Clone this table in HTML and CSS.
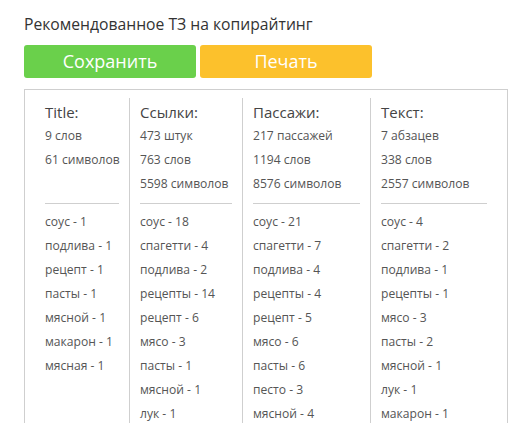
FILE: index.html
```html
<!DOCTYPE html>
<html lang="ru">
<head>
<meta charset="utf-8">
<title>Рекомендованное ТЗ на копирайтинг</title>
<link rel="stylesheet" href="styles.css">
</head>
<body>
<div class="page">
  <h1 class="page-title">Рекомендованное ТЗ на копирайтинг</h1>
  <div class="actions">
    <button class="btn btn-save">Сохранить</button>
    <button class="btn btn-print">Печать</button>
  </div>
  <div class="report">
    <div class="col">
      <div class="col-head">Title:</div>
      <ul class="stats">
        <li>9 слов</li>
        <li>61 символов</li>
      </ul>
      <hr class="rule">
      <ul class="words">
        <li>соус - 1</li>
        <li>подлива - 1</li>
        <li>рецепт - 1</li>
        <li>пасты - 1</li>
        <li>мясной - 1</li>
        <li>макарон - 1</li>
        <li>мясная - 1</li>
      </ul>
    </div>
    <div class="col">
      <div class="col-head">Ссылки:</div>
      <ul class="stats">
        <li>473 штук</li>
        <li>763 слов</li>
        <li>5598 символов</li>
      </ul>
      <hr class="rule">
      <ul class="words">
        <li>соус - 18</li>
        <li>спагетти - 4</li>
        <li>подлива - 2</li>
        <li>рецепты - 14</li>
        <li>рецепт - 6</li>
        <li>мясо - 3</li>
        <li>пасты - 1</li>
        <li>мясной - 1</li>
        <li>лук - 1</li>
      </ul>
    </div>
    <div class="col">
      <div class="col-head">Пассажи:</div>
      <ul class="stats">
        <li>217 пассажей</li>
        <li>1194 слов</li>
        <li>8576 символов</li>
      </ul>
      <hr class="rule">
      <ul class="words">
        <li>соус - 21</li>
        <li>спагетти - 7</li>
        <li>подлива - 4</li>
        <li>рецепты - 4</li>
        <li>рецепт - 5</li>
        <li>мясо - 6</li>
        <li>пасты - 6</li>
        <li>песто - 3</li>
        <li>мясной - 4</li>
      </ul>
    </div>
    <div class="col">
      <div class="col-head">Текст:</div>
      <ul class="stats">
        <li>7 абзацев</li>
        <li>338 слов</li>
        <li>2557 символов</li>
      </ul>
      <hr class="rule">
      <ul class="words">
        <li>соус - 4</li>
        <li>спагетти - 2</li>
        <li>подлива - 1</li>
        <li>рецепты - 1</li>
        <li>мясо - 3</li>
        <li>пасты - 2</li>
        <li>мясной - 1</li>
        <li>лук - 1</li>
        <li>макарон - 1</li>
      </ul>
    </div>
  </div>
</div>
</body>
</html>
```

FILE: styles.css
```css
html, body {
  margin: 0;
  padding: 0;
  background: #ffffff;
}

body {
  font-family: "Open Sans", "Noto Sans", sans-serif;
  color: #555555;
}

.page {
  padding: 14px 7px 0 24px;
}

.page-title {
  margin: 0;
  font-size: 15.7px;
  line-height: 20px;
  font-weight: 400;
  color: #333333;
  white-space: nowrap;
}

.actions {
  display: flex;
  gap: 4px;
  margin-top: 11px;
}

.btn {
  width: 172px;
  height: 33px;
  border: 0;
  border-radius: 3px;
  font-family: "Open Sans", "Noto Sans", sans-serif;
  font-size: 18px;
  color: #ffffff;
  padding: 0;
  line-height: 33px;
}

.btn-save {
  background: #6ad04b;
}

.btn-print {
  background: #fcc12c;
}

.report {
  margin-top: 11px;
  width: 484px;
  box-sizing: border-box;
  border: 1px solid #cfcfcf;
  border-bottom: 0;
  padding: 8px 10px 0 10px;
  display: grid;
  grid-template-columns: 95px 113px 128px 1fr;
}

.col {
  padding: 2px 10px 0 10px;
  border-right: 1px solid #cfcfcf;
}

.col:last-child {
  border-right: 0;
}

.col-head {
  font-size: 15px;
  line-height: 24px;
  color: #444444;
  white-space: nowrap;
}

.stats,
.words {
  list-style: none;
  margin: 0;
  padding: 0;
  font-size: 12.1px;
  line-height: 24px;
  white-space: nowrap;
}

.stats {
  height: 72px;
}

.rule {
  border: 0;
  border-top: 1px solid #cfcfcf;
  margin: 7px 0 6px 0;
  height: 0;
}
```
